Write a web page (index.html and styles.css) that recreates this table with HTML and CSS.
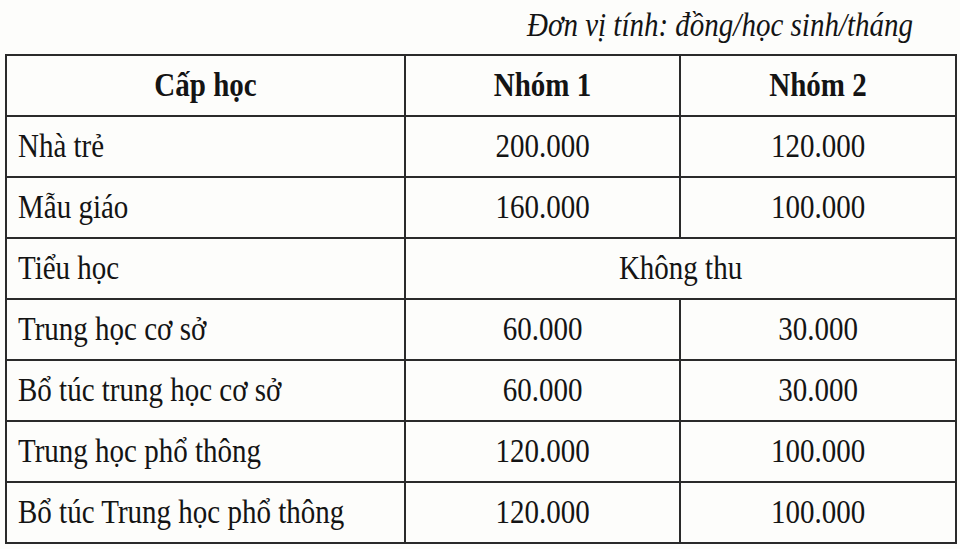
FILE: index.html
```html
<!DOCTYPE html>
<html lang="vi">
<head>
<meta charset="utf-8">
<title>Bảng học phí</title>
<link rel="stylesheet" href="styles.css">
</head>
<body>
<div class="page">
  <div class="unit"><span class="tx">Đơn vị tính: đồng/học sinh/tháng</span></div>
  <table class="fees">
    <colgroup>
      <col class="c1"><col class="c2"><col class="c3">
    </colgroup>
    <thead>
      <tr><th><span class="tx">Cấp học</span></th><th><span class="tx">Nhóm 1</span></th><th><span class="tx">Nhóm 2</span></th></tr>
    </thead>
    <tbody>
      <tr><td class="lvl"><span class="tx">Nhà trẻ</span></td><td><span class="tx">200.000</span></td><td><span class="tx">120.000</span></td></tr>
      <tr><td class="lvl"><span class="tx">Mẫu giáo</span></td><td><span class="tx">160.000</span></td><td><span class="tx">100.000</span></td></tr>
      <tr><td class="lvl"><span class="tx">Tiểu học</span></td><td colspan="2"><span class="tx">Không thu</span></td></tr>
      <tr><td class="lvl"><span class="tx">Trung học cơ sở</span></td><td><span class="tx">60.000</span></td><td><span class="tx">30.000</span></td></tr>
      <tr><td class="lvl"><span class="tx">Bổ túc trung học cơ sở</span></td><td><span class="tx">60.000</span></td><td><span class="tx">30.000</span></td></tr>
      <tr><td class="lvl"><span class="tx">Trung học phổ thông</span></td><td><span class="tx">120.000</span></td><td><span class="tx">100.000</span></td></tr>
      <tr><td class="lvl"><span class="tx">Bổ túc Trung học phổ thông</span></td><td><span class="tx">120.000</span></td><td><span class="tx">100.000</span></td></tr>
    </tbody>
  </table>
</div>
</body>
</html>
```
FILE: styles.css
```css
html, body {
  margin: 0;
  padding: 0;
  background: #fdfdfb;
}
.page {
  width: 960px;
  height: 549px;
  overflow: hidden;
  font-family: "Liberation Serif", "Times New Roman", serif;
  color: #141414;
  font-size: 29px;
}
.tx {
  display: inline-block;
  transform: scaleY(1.13);
}
.unit {
  height: 54px;
  box-sizing: border-box;
  padding: 9px 47px 0 0;
  line-height: 33px;
  text-align: right;
  font-style: italic;
}
.fees {
  margin-left: 5px;
  width: 950px;
  border-collapse: collapse;
  table-layout: fixed;
}
.c1 { width: 399px; }
.c2 { width: 275px; }
.c3 { width: 276px; }
.fees th, .fees td {
  border: 2px solid #2a2a2a;
  height: 61px;
  padding: 0;
  box-sizing: border-box;
  text-align: center;
  vertical-align: middle;
  line-height: 33px;
  font-weight: normal;
}
.fees th {
  font-weight: bold;
}
.fees td.lvl {
  text-align: left;
  padding-left: 11px;
}
```
